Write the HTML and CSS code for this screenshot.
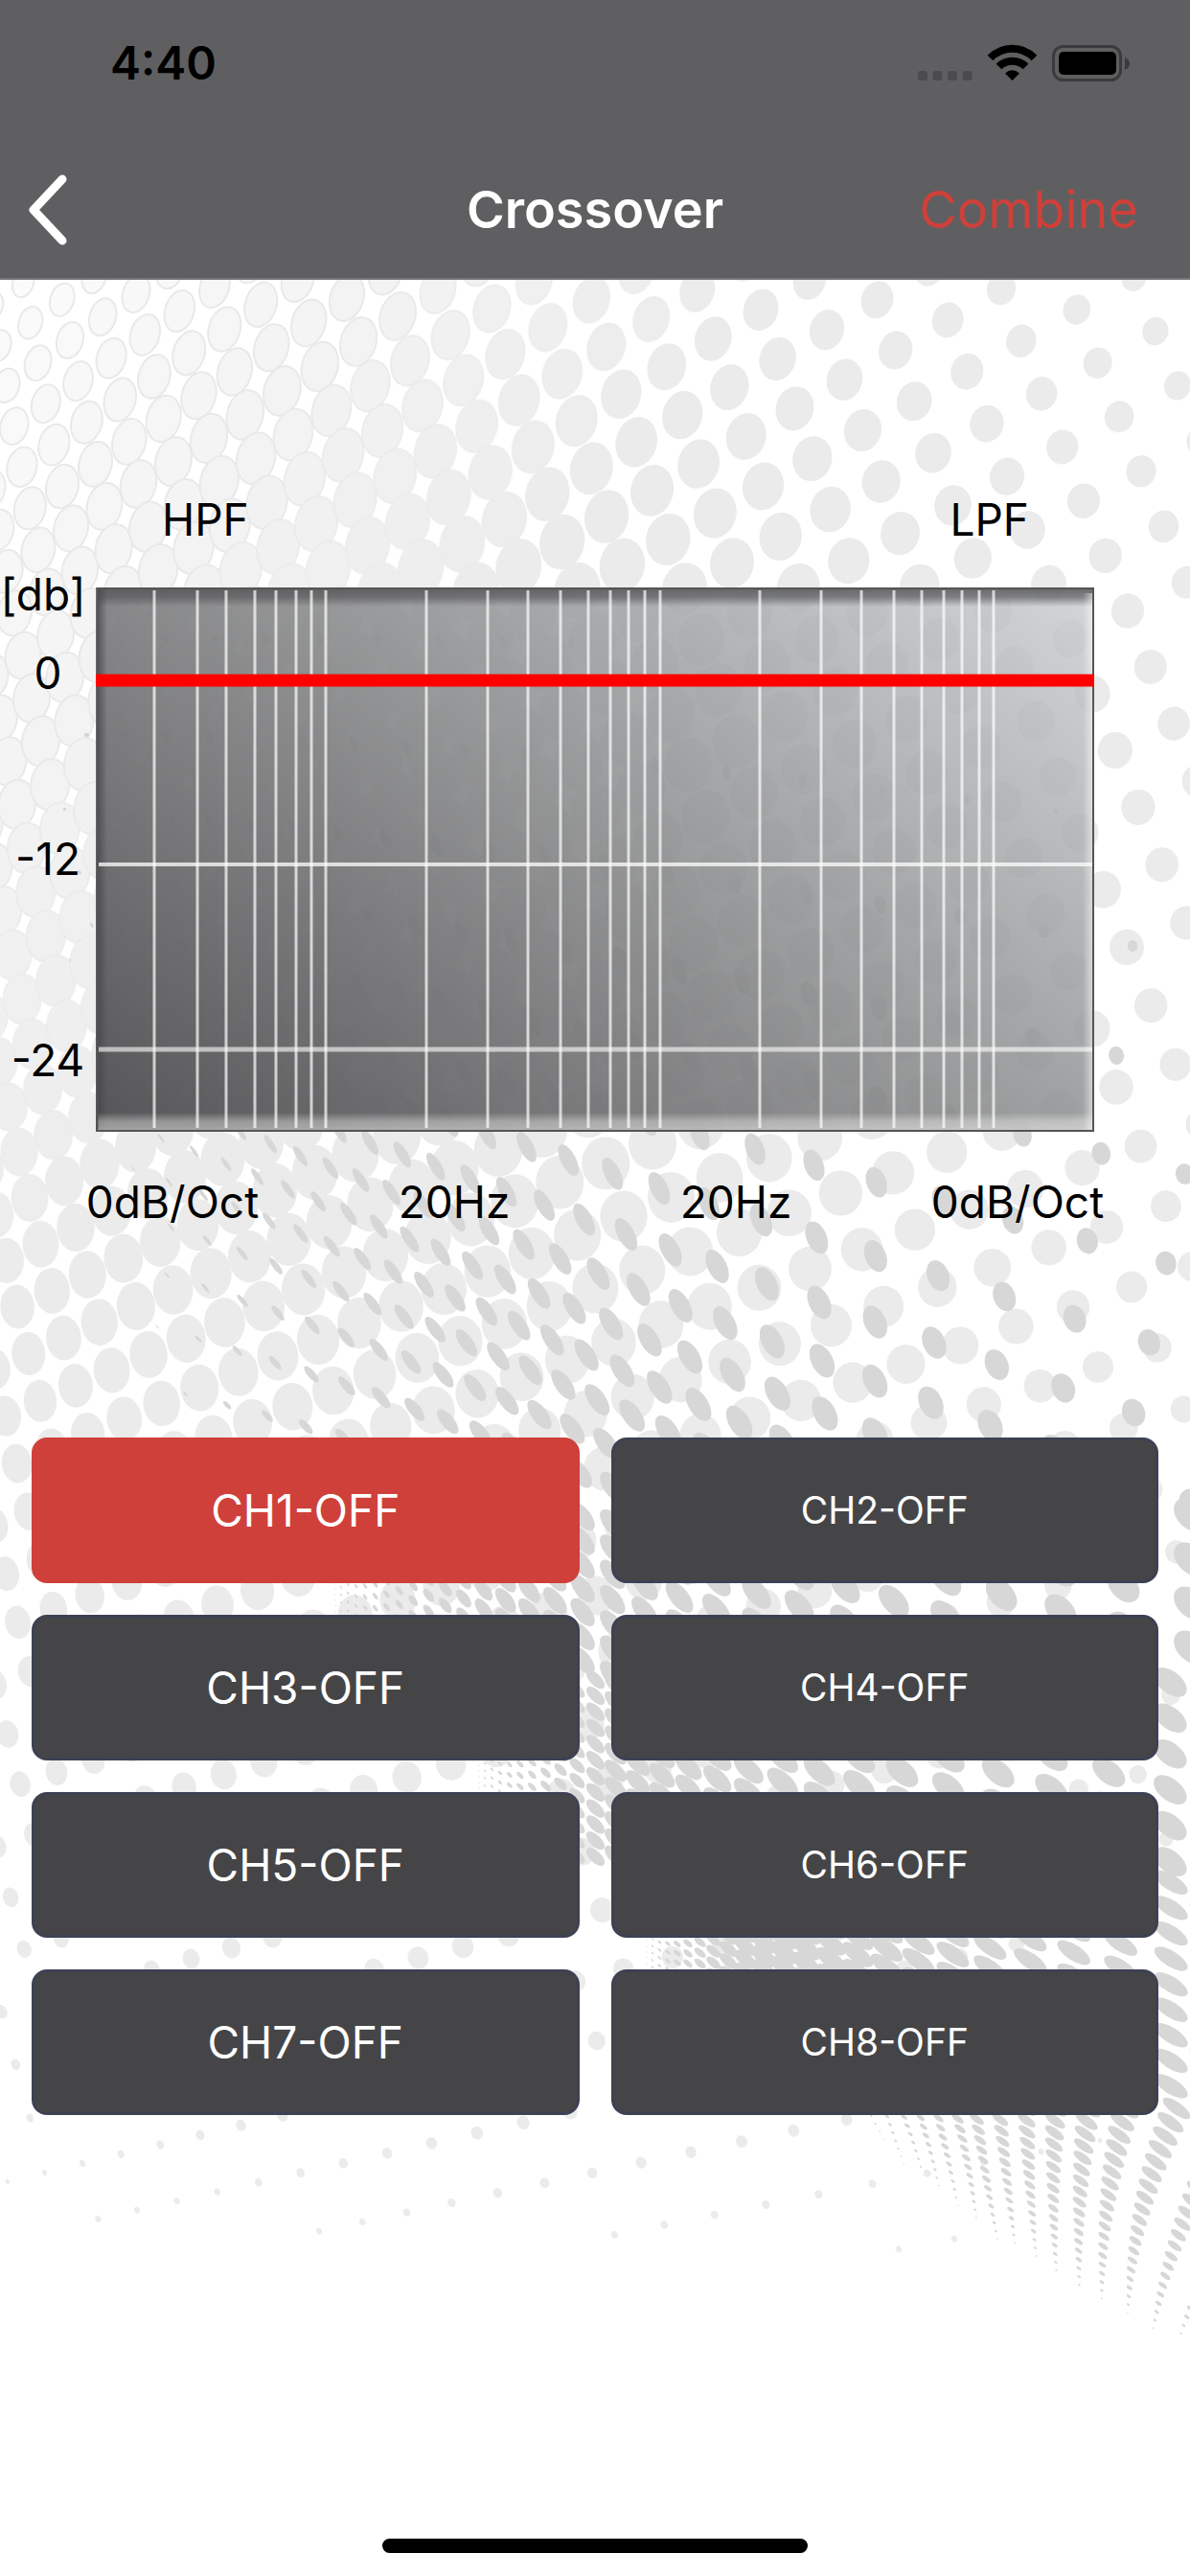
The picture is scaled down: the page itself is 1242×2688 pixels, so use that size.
FILE: index.html
```html
<!DOCTYPE html>
<html lang="en">
<head>
    <meta charset="UTF-8">
    <meta name="viewport" content="width=device-width, initial-scale=1.0">
    <title>Crossover</title>
    <link rel="stylesheet" href="styles.css">
</head>
<body>
    <header class="header">
        <div class="status-bar">
            <span class="time">4:40</span>
            <svg class="status-icons" viewBox="0 0 222 40" aria-hidden="true">
                <g fill="#4b4b4d">
                    <rect x="0" y="28" width="10" height="10" rx="3"/>
                    <rect x="15.5" y="28" width="10" height="10" rx="3"/>
                    <rect x="31" y="28" width="10" height="10" rx="3"/>
                    <rect x="46.5" y="28" width="10" height="10" rx="3"/>
                </g>
                <g fill="none" stroke="#000" stroke-width="8">
                    <path d="M75.5 14.5a32 32 0 0 1 46 0"/>
                    <path d="M84.5 23.500a20 20 0 0 1 28 0"/>
                </g>
                <path d="M98.500 38l-7.500-7.500q7.500-6.500 15 0z"/>
                <rect x="141.500" y="2.500" width="70" height="35" rx="10" fill="none" stroke="#3b3b3d" stroke-width="3"/>
                <rect x="147" y="8" width="60" height="24" rx="5"/>
                <path d="M216 14q5 2 5 6.500t-5 6.500z" fill="#3b3b3d"/>
            </svg>
        </div>
        <nav class="nav-bar">
            <button class="back" aria-label="Back">
                <svg viewBox="0 0 44 76"><path d="M39 6L9 38l30 32"/></svg>
            </button>
            <h1>Crossover</h1>
            <button class="combine">Combine</button>
        </nav>
    </header>

    <main>
        <svg class="halftone" viewBox="0 290 1242 2398" preserveAspectRatio="xMidYMin slice" aria-hidden="true">
            <g id="lightDots"></g>
            <g id="darkDots" fill="#d7d7d7"></g>
        </svg>

        <div class="filter-names">
            <span>HPF</span>
            <span>LPF</span>
        </div>

        <div class="chart-row">
            <div class="axis">
                <span class="unit">[db]</span>
                <span class="zero">0</span>
                <span class="minus12">-12</span>
                <span class="minus24">-24</span>
            </div>
            <div class="chart">
                <svg id="grid" viewBox="0 0 1042 568" preserveAspectRatio="none" role="img" aria-label="Crossover curve"></svg>
            </div>
        </div>

        <div class="values">
            <button>0dB/Oct</button>
            <button>20Hz</button>
            <button>20Hz</button>
            <button>0dB/Oct</button>
        </div>

        <div class="channels">
            <button class="active">CH1-OFF</button>
            <button>CH2-OFF</button>
            <button>CH3-OFF</button>
            <button>CH4-OFF</button>
            <button>CH5-OFF</button>
            <button>CH6-OFF</button>
            <button>CH7-OFF</button>
            <button>CH8-OFF</button>
        </div>

        <div class="home-bar"></div>
    </main>

    <script src="script.js"></script>
</body>
</html>
```
FILE: styles.css
```css
* {
    box-sizing: border-box;
}
body {
    margin: 0;
    min-height: 100vh;
    display: flex;
    flex-direction: column;
    font-family: Inter, "Liberation Sans", sans-serif;
    font-size: 46px;
    line-height: 54px;
    color: #000;
    background-color: #fff;
}
button {
    margin: 0;
    padding: 0;
    border: none;
    background: none;
    font: inherit;
    color: inherit;
    cursor: pointer;
}
.header {
    background-color: #5f5f61;
    border-bottom: 2px solid #777779;
}
.status-bar {
    display: flex;
    justify-content: space-between;
    align-items: center;
    height: 132px;
    padding: 0 62px 0 115px;
}
.time {
    font-size: 48px;
    font-weight: 600;
}
.status-icons {
    width: 222px;
    height: 40px;
}
.nav-bar {
    display: grid;
    grid-template-columns: 1fr auto 1fr;
    align-items: center;
    height: 158px;
    padding: 16px 26px 0;
}
.back {
    justify-self: start;
    width: 44px;
    height: 76px;
}
.back svg {
    display: block;
    fill: none;
    stroke: #fff;
    stroke-width: 9;
    stroke-linecap: round;
    stroke-linejoin: round;
}
h1 {
    margin: 0;
    font-size: 54px;
    font-weight: 600;
    color: #fff;
}
.combine {
    justify-self: end;
    margin-right: 28px;
    font-size: 54px;
    color: #cf403a;
}
main {
    position: relative;
    flex: 1;
    display: flex;
    flex-direction: column;
    overflow: hidden;
}
main > div {
    position: relative;
}
.halftone {
    position: absolute;
    top: 0;
    left: 0;
    width: 100%;
    height: 100%;
}
.filter-names {
    display: flex;
    justify-content: space-between;
    padding: 223px 168px 0 169px;
}
.chart-row {
    display: grid;
    grid-template-columns: 100px 1fr 100px;
    margin-top: 44px;
}
.axis {
    display: flex;
    flex-direction: column;
    text-align: center;
}
.unit {
    margin-top: -20px;
    padding-right: 10px;
}
.zero {
    margin-top: 28px;
}
.minus12 {
    margin-top: 140px;
}
.minus24 {
    margin-top: 156px;
}
.chart {
    background: linear-gradient(38deg, rgba(82, 82, 84, 0.98), rgba(136, 137, 138, 0.88) 52%, rgba(200, 203, 205, 0.78));
}
#grid {
    display: block;
    width: 100%;
    height: 568px;
}
.values {
    display: grid;
    grid-template-columns: repeat(4, 1fr);
    margin-top: 46px;
    padding: 0 33px;
}
.channels {
    display: grid;
    grid-template-columns: 1fr 1fr;
    gap: 33px;
    margin-top: 219px;
    padding: 0 33px;
}
.channels button {
    height: 152px;
    border: 3px solid #3d4154;
    border-radius: 16px;
    background-color: #454547;
    color: #fff;
}
.channels button:nth-child(even) {
    font-size: 39px;
}
.channels .active {
    background-color: #cf403a;
    border-color: #cf403a;
}
.home-bar {
    width: 444px;
    height: 15px;
    margin: auto auto 24px;
    border-radius: 8px;
    background-color: #000;
}
```
FILE: script.js
```js
// ---- chart grid ----
const gridX = [61, 106, 136, 166, 188, 209, 225, 240, 345, 409, 451, 485, 514,
    537, 556, 573, 589, 693, 757, 799, 833, 862, 885, 904, 922, 937];

function drawGrid() {
    let s = `<defs>
        <linearGradient id="topShade" x2="0" y2="1"><stop stop-color="#555557" stop-opacity=".85"/><stop offset=".5" stop-color="#555557" stop-opacity=".65"/><stop offset="1" stop-color="#555557" stop-opacity="0"/></linearGradient>
        <linearGradient id="leftShade"><stop stop-color="#444446" stop-opacity=".8"/><stop offset="1" stop-color="#444446" stop-opacity="0"/></linearGradient>
        <linearGradient id="bottomShade" x2="0" y2="1"><stop stop-color="#fff" stop-opacity="0"/><stop offset=".5" stop-color="#fff" stop-opacity=".35"/><stop offset="1" stop-color="#fff" stop-opacity=".45"/></linearGradient>
        <linearGradient id="rightShade"><stop stop-color="#fff" stop-opacity="0"/><stop offset="1" stop-color="#fff" stop-opacity=".55"/></linearGradient>
    </defs>
    <rect x="1" width="1040" height="20" fill="url(#topShade)"/>
    <rect x="1" width="11" height="568" fill="url(#leftShade)"/>
    <rect x="1" y="548" width="1040" height="18" fill="url(#bottomShade)"/>
    <rect x="1030" y="6" width="11" height="560" fill="url(#rightShade)"/>`;
    gridX.forEach(x => {
        s += `<path d="M${x} 3V564" stroke="#fff" stroke-opacity=".7" stroke-width="3"/>`;
    });
    s += `<path d="M3 289H1040" stroke="#fff" stroke-opacity=".75" stroke-width="4"/>
        <path d="M3 482H1040" stroke="#fff" stroke-opacity=".6" stroke-width="5"/>
        <rect x="1.500" y="1" width="1039.500" height="566" fill="none" stroke="#555557" stroke-width="2"/>
        <path d="M0 97H1042" stroke="#f00" stroke-width="13"/>`;
    document.getElementById('grid').innerHTML = s;
}

// ---- halftone background ----

// least squares polynomial surface through rows of [u, v, value, value...]
function surface(points, degree, scaleU, scaleV) {
    const terms = (u, v) => {
        const t = [];
        for (let i = 0; i <= degree; i++) {
            for (let j = 0; i + j <= degree; j++) t.push((u / scaleU) ** i * (v / scaleV) ** j);
        }
        return t;
    };
    const n = terms(0, 0).length;
    const outputs = points[0].length - 2;
    const m = Array.from({ length: n }, () => new Array(n + outputs).fill(0));
    points.forEach(p => {
        const t = terms(p[0], p[1]);
        for (let r = 0; r < n; r++) {
            for (let c = 0; c < n; c++) m[r][c] += t[r] * t[c];
            for (let k = 0; k < outputs; k++) m[r][n + k] += t[r] * p[2 + k];
        }
    });
    for (let r = 0; r < n; r++) m[r][r] += 1e-7;
    for (let c = 0; c < n; c++) {
        let best = c;
        for (let r = c + 1; r < n; r++) if (Math.abs(m[r][c]) > Math.abs(m[best][c])) best = r;
        [m[c], m[best]] = [m[best], m[c]];
        for (let r = 0; r < n; r++) {
            if (r === c) continue;
            const f = m[r][c] / m[c][c];
            for (let k = c; k < n + outputs; k++) m[r][k] -= f * m[c][k];
        }
    }
    return (u, v) => {
        const t = terms(u, v);
        const out = [];
        for (let k = 0; k < outputs; k++) {
            out.push(t.reduce((sum, value, r) => sum + value * m[r][n + k] / m[r][r], 0));
        }
        return out;
    };
}

function ellipse(x, y, w, h, angle, extra = '') {
    return `<ellipse cx="${x.toFixed(1)}" cy="${y.toFixed(1)}" rx="${(w / 2).toFixed(1)}" ry="${(h / 2).toFixed(1)}" transform="rotate(${angle.toFixed(1)} ${x.toFixed(1)} ${y.toFixed(1)})" ${extra}/>`;
}

function drawLightDots() {
    // column, row, x, y
    const mesh = [
        [-12, 5, 24, 293], [-9, 5, 152, 347], [-6, 5, 295, 404], [-3, 5, 454, 468], [0, 5, 635, 535], [3, 5, 833, 612], [8, 5, 1225, 753],
        [0, 0, 556, 297], [3, 0, 745, 349], [5, 0, 882, 393], [7, 0, 1030, 440], [9, 0, 1191, 490],
        [5, 2, 919, 500], [5, 4, 960, 610], [5, 6, 1000, 721], [5, 8, 1047, 835], [5, 10, 1092, 952], [5, 12, 1140, 1072], [5, 15, 1218, 1256],
        [-11, 5, 65, 310], [-11, 8, 90, 439], [-11, 10, 108, 527], [-13, 9, 15, 443], [-13, 12, 40, 573], [-13, 16, 77, 750],
        [-15, 19, 18, 837], [-15, 23, 59, 1021], [-15, 30, 141, 1362], [-15, 32, 169, 1462], [-14, 31, 208, 1446],
        [-18, 33, 30, 1410], [-18, 38, 94, 1661], [-17, 37, 133, 1652], [-20, 40, 19, 1690], [-20, 43, 59, 1846],
        [-21, 44, 20, 1859], [-22, 48, 25, 2033], [-23, 50, 2, 2098], [-23, 53, 47, 2265], [-17, 47, 295, 2206],
        [-22, 53, 102, 2313], [-17, 48, 314, 2265], [-12, 43, 546, 2213], [-17, 49, 333, 2326], [-11, 43, 618, 2265], [-6, 38, 884, 2211],
        [-11, 44, 641, 2329], [-5, 38, 968, 2266], [-6, 40, 938, 2345],
        [3, 12, 975, 1002], [1, 12, 827, 935], [0, 12, 756, 905], [0, 15, 813, 1072], [0, 18, 876, 1243], [0, 20, 922, 1362], [0, 22, 969, 1482],
        [0, 25, 1045, 1670], [1, 24, 1106, 1654], [2, 25, 1220, 1766], [-1, 23, 914, 1498]
    ];
    // x, y, width, height
    const sizes = [
        [65, 310, 25, 37], [300, 500, 40, 54], [620, 320, 39, 50], [600, 560, 47, 59], [882, 393, 36, 42], [1190, 490, 30, 32], [1220, 330, 27, 30],
        [760, 900, 50, 57], [1190, 1193, 35, 36], [50, 617, 34, 46], [60, 1021, 44, 56], [30, 1410, 34, 46], [169, 1462, 40, 51], [700, 1325, 49, 50],
        [100, 1200, 42, 54], [300, 1300, 44, 54], [60, 820, 42, 54],
        [1045, 1670, 29, 29], [20, 1690, 26, 34], [94, 1661, 28, 36], [270, 1661, 34, 38], [20, 1859, 22, 25], [11, 1978, 16, 21], [200, 2040, 19, 22],
        [500, 2030, 22, 24], [47, 2265, 6, 8], [252, 2216, 11, 13], [550, 2213, 13, 15], [669, 2254, 12, 13], [900, 2277, 9, 10], [1100, 2000, 15, 16],
        [170, 2294, 7, 8], [403, 2245, 10, 12], [471, 2296, 9, 11], [746, 2309, 8, 10], [855, 2288, 7, 9], [938, 2345, 5, 6],
        [0, 2350, 0, 0], [250, 2380, 0, 0], [600, 2410, 0, 0], [850, 2430, 0, 0], [1200, 2300, 0, 0]
    ];
    // the lowest rows start further and further right
    const firstColumn = { 31: -22, 32: -17, 33: -11, 34: -6 };
    const place = surface(mesh, 4, 20, 40);
    const size = surface(sizes, 4, 1242, 2400);
    let s = '';
    for (let i = -26; i <= 14; i++) {
        for (let j = -14; j <= 56; j++) {
            const row = i + j;
            if (row < -12 || row > 34 || i < firstColumn[row]) continue;
            const [x, y] = place(i, j);
            if (x < -30 || x > 1275 || y < 260 || y > 2360) continue;
            let [w, h] = size(x, y);
            if (row > 30 && x < 1010) {
                w = Math.max(w, 6);
                h = Math.max(h, 7);
            }
            if (w < 3 || h < 3) continue;
            const pale = Math.max(0, Math.min(1, 1 - (x + y * 0.7 - 210) / 780));
            const grey = Math.round(235 + 16 * pale);
            const line = `fill="rgb(${grey},${grey},${grey})"` + (pale > 0.05 ? ` stroke="#e9e9e9" stroke-width="2" stroke-opacity="${Math.min(1, pale * 2).toFixed(2)}"` : '');
            s += ellipse(x, y, w, h, 18 - (y - 290) / 50, line);
        }
    }
    document.getElementById('lightDots').innerHTML = s;
}

function drawDarkDots() {
    const mesh = [
        [0, 0, 750, 1320], [2, 0, 856, 1356], [4, 0, 975, 1399], [6, 0, 1109, 1446], [7, 0, 1183, 1472],
        [-2, 1, 666, 1344], [0, 1, 758, 1379], [3, 1, 914, 1439], [5, 1, 1034, 1485], [-3, 2, 637, 1380], [0, 2, 766, 1433], [3, 2, 914, 1493],
        [0, 3, 773, 1484], [-3, 3, 648, 1429], [-3, 4, 659, 1475], [3, -1, 912, 1303], [5, -1, 1047, 1351], [7, -1, 1199, 1400],
        [3, -2, 913, 1232], [1, -2, 789, 1197], [3, -3, 913, 1147], [1, -3, 781, 1115], [0, -3, 723, 1100], [5, -3, 1064, 1183], [7, -3, 1237, 1226],
        [3, -4, 914, 1051], [0, -4, 711, 1011], [5, -4, 1076, 1082], [6, -4, 1167, 1100], [3, -5, 915, 942], [1, -5, 766, 920], [6, -5, 1188, 980],
        [0, -1, 742, 1255], [-2, -1, 642, 1221], [-4, -1, 552, 1194], [-3, 0, 610, 1270], [-5, 0, 529, 1240], [-7, 0, 454, 1213], [-9, 0, 386, 1190],
        [-4, 1, 584, 1314], [-9, 1, 406, 1242], [-11, 1, 345, 1218], [-5, 2, 560, 1349], [-7, 2, 491, 1320], [-5, 3, 574, 1397], [-8, 3, 474, 1354], [-10, 3, 414, 1325],
        [-5, 4, 588, 1442], [-8, 4, 489, 1396], [3, 6, 920, 1677], [5, 5, 1017, 1682], [6, 4, 1077, 1668], [8, 3, 1212, 1676], [8, 2, 1227, 1623]
    ];
    const sizes = [
        [912, 1307, 20, 32], [1109, 1446, 21, 27], [750, 1320, 21, 39], [600, 1364, 18, 40], [414, 1325, 10, 31], [293, 1332, 5, 18], [200, 1340, 2, 8],
        [1188, 980, 14, 18], [842, 1036, 15, 27], [1150, 1204, 19, 23], [597, 1207, 17, 37], [454, 1213, 12, 33], [345, 1218, 8, 25], [690, 1447, 21, 41],
        [838, 929, 14, 24], [600, 660, 5, 12], [900, 800, 3, 5], [600, 560, 0, 0], [1200, 850, 0, 0], [100, 900, 2, 4], [60, 1100, 1, 3],
        [150, 1250, 2, 6], [100, 1400, 0, 0], [250, 1480, 2, 6], [350, 1500, 9, 22], [450, 1480, 15, 34], [1200, 1600, 25, 32], [920, 1660, 24, 38]
    ];
    const place = surface(mesh, 3, 10, 5);
    const size = surface(sizes, 3, 1242, 1600);
    let s = '';
    for (let a = -24; a <= 9; a++) {
        for (let b = -12; b <= 10; b++) {
            const [x, y] = place(a, b);
            if (x < 60 || x > 1275 || y < 640 || y > 1570) continue;
            const [w, h] = size(x, y);
            if (w < 1 || h < 3) continue;
            const lean = Math.max(8, Math.min(48, 28 - (x - 600) / 40 + (y - 1250) / 30));
            s += ellipse(x, y, w, h, -lean);
        }
    }

    // tighter bands further down: y range, first x, column and row pitch at the right edge, tilt
    const bands = [
        [1572, 1750, 350, 74, 46, 46],
        [1750, 1945, 500, 70, 38, 38],
        [1945, 2190, 675, 58, 27, 32]
    ];
    bands.forEach(([top, bottom, left, pitch, rows, tilt]) => {
        let shift = 0;
        for (let x = left; x < 1270;) {
            const f = (x - left) / (1242 - left);
            const px = 6 + (pitch - 6) * f ** 0.8;
            const py = 6 + (rows - 6) * f ** 0.6;
            const grow = Math.min(1, 0.2 + f * 4);
            const long = Math.min(40, 10 + 46 * Math.sqrt(f));
            const short = Math.min(rows * 0.6, 4 + 24 * Math.sqrt(f));
            for (let y = top + (shift % py); y < bottom; y += py) {
                s += ellipse(x, y, long * grow, short * grow, tilt + 8 * (1 - f));
            }
            shift += px * 0.42;
            x += px;
        }
    });

    // fan of columns that thin out towards the bottom: top x, middle x, bottom x, bottom y
    const fan = [
        [905, 918, 930, 2245], [923, 935, 947, 2267], [940, 955, 965, 2273], [958, 972, 982, 2288], [977, 990, 1001, 2305],
        [997, 1012, 1020, 2320], [1018, 1028, 1042, 2340], [1043, 1050, 1060, 2345], [1071, 1073, 1082, 2357], [1102, 1096, 1103, 2375],
        [1136, 1122, 1127, 2392], [1175, 1148, 1150, 2403], [1228, 1180, 1177, 2415], [1295, 1222, 1203, 2433], [1375, 1270, 1230, 2440]
    ];
    fan.forEach(([x0, x1, x2, end], k) => {
        for (let y = 2198; y < end;) {
            const t = (y - 2198) / (end - 2198);
            const x = (1 - t) ** 2 * x0 + 2 * t * (1 - t) * x1 + t * t * x2;
            const w = (3 + k * 2.6) * (1 - t) ** 0.8;
            if (w > 1) s += ellipse(x, y, w, 1 + w * 0.34, 36);
            y += 8 + k * 0.55 * (1 - t);
        }
    });
    document.getElementById('darkDots').innerHTML = s;
}

drawGrid();
drawLightDots();
drawDarkDots();
```
